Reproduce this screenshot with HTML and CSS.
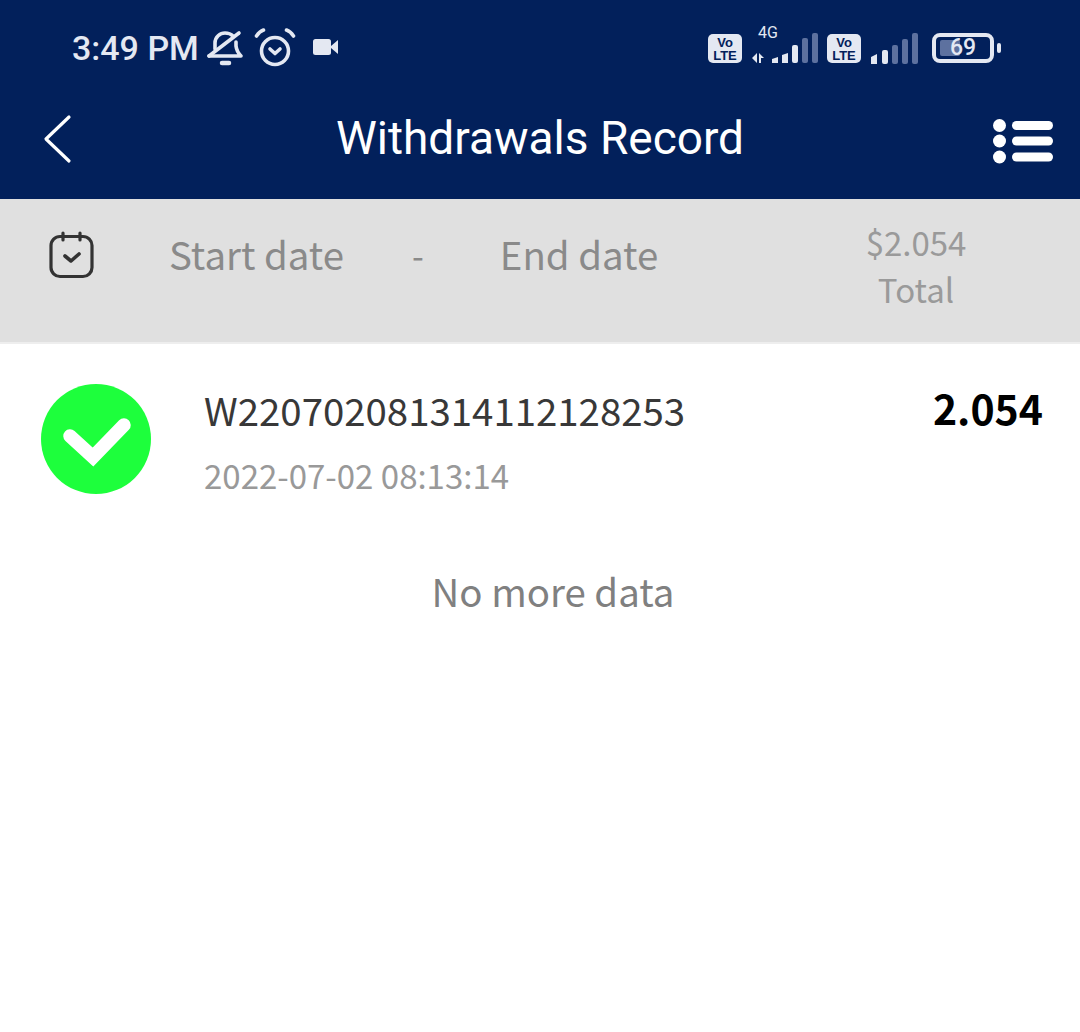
FILE: index.html
```html
<!DOCTYPE html>
<html lang="en">
<head>
  <meta charset="UTF-8">
  <title>Withdrawals Record</title>
  <link rel="stylesheet" href="styles.css">
</head>
<body>
  <div class="top">
    <div class="status-bar">
      <span class="time">3:49 PM</span>
      <svg class="bell" width="38" height="40" viewBox="0 0 38 40" fill="none" stroke="#e4e8f2" stroke-width="3.6" stroke-linecap="round" stroke-linejoin="round">
        <path d="M3 29h32c-3-3-4.500-6-5-10v-4"/>
        <path d="M9 22v-6c0-6 5-10 10-10 3 0 6 1 8 3"/>
        <path d="M3 29L33 6"/>
        <path d="M16 36h7" stroke-width="4.500"/>
      </svg>
      <svg class="alarm" width="42" height="40" viewBox="0 0 42 40" fill="none" stroke="#e4e8f2" stroke-width="3.6" stroke-linecap="round" stroke-linejoin="round">
        <circle cx="21" cy="23" r="13.500"/>
        <path d="M16 21l5 4.500 5-4.500"/>
        <path d="M2.500 8c2-3 4-5 7-6"/>
        <path d="M39.500 8c-2-3-4-5-7-6"/>
      </svg>
      <svg class="video" width="26" height="16" viewBox="0 0 26 16">
        <rect x="0" y="0" width="18" height="16" rx="2.500" fill="#e4e8f2"/>
        <path d="M18 7l7-6v14l-7-6z" fill="#e4e8f2"/>
      </svg>
      <div class="status-right">
        <span class="volte"><b>Vo</b><b>LTE</b></span>
        <div class="signal-first">
          <span class="net">4G</span>
          <svg width="67" height="31" viewBox="0 0 67 31">
            <g fill="#e4e8f2">
              <path d="M1 26l5-5v10zM8 31V21l5 5h-3v5z"/>
              <path d="M21 27l6-2v6h-6z"/>
              <path d="M31 23l6-2v10h-6z"/>
            </g>
            <rect x="41" y="13" width="6" height="18" rx="2" fill="#e4e8f2"/>
            <rect x="51" y="6" width="6" height="25" rx="2" fill="#5d719f"/>
            <rect x="61" y="1" width="6" height="30" rx="2" fill="#5d719f"/>
          </svg>
        </div>
        <span class="volte"><b>Vo</b><b>LTE</b></span>
        <svg class="signal-second" width="48" height="31" viewBox="0 0 48 31">
          <path d="M0 24l6-3v10H0z" fill="#e4e8f2"/>
          <rect x="11" y="17" width="6" height="14" rx="2" fill="#e4e8f2"/>
          <rect x="21" y="12" width="6" height="19" rx="2" fill="#5d719f"/>
          <rect x="31" y="6" width="6" height="25" rx="2" fill="#5d719f"/>
          <rect x="41" y="0" width="6" height="31" rx="2" fill="#5d719f"/>
        </svg>
        <div class="battery">
          <div class="battery-body">
            <div class="battery-fill"></div>
            <span class="battery-level">69</span>
          </div>
          <div class="battery-tip"></div>
        </div>
      </div>
    </div>
    <div class="title-bar">
      <svg class="back" width="30" height="50" viewBox="0 0 30 50" fill="none" stroke="#fff" stroke-width="3.200" stroke-linecap="round" stroke-linejoin="round">
        <path d="M26 3L3 25l23 22"/>
      </svg>
      <h1>Withdrawals Record</h1>
      <svg class="menu" width="60" height="45" viewBox="0 0 60 45" fill="#fff">
        <circle cx="6.500" cy="6.500" r="6.500"/>
        <circle cx="6.500" cy="22" r="6.500"/>
        <circle cx="6.500" cy="38" r="6.500"/>
        <rect x="19" y="2" width="41" height="9" rx="4.500"/>
        <rect x="19" y="17.500" width="41" height="9" rx="4.500"/>
        <rect x="19" y="33.500" width="41" height="9" rx="4.500"/>
      </svg>
    </div>
  </div>

  <div class="filter-bar">
    <svg class="calendar" width="46" height="48" viewBox="0 0 46 48" fill="none" stroke="#333" stroke-width="3.200" stroke-linecap="round" stroke-linejoin="round">
      <rect x="3" y="5.500" width="41" height="40" rx="9"/>
      <path d="M15 2v7M32 2v7"/>
      <path d="M17 25l6 5 8-7" stroke-width="3.600"/>
    </svg>
    <span class="date-input">Start date</span>
    <span class="date-sep">-</span>
    <span class="date-input">End date</span>
    <div class="total">
      <span>$2.054</span>
      <span>Total</span>
    </div>
  </div>

  <div class="record">
    <div class="record-icon">
      <svg width="110" height="110" viewBox="0 0 110 110">
        <circle cx="55" cy="55" r="55" fill="#1dff3c"/>
        <path d="M29 52l23 21 31-32" fill="none" stroke="#fff" stroke-width="13.500" stroke-linecap="round" stroke-linejoin="miter"/>
      </svg>
    </div>
    <div class="record-info">
      <div class="record-no">W220702081314112128253</div>
      <div class="record-time">2022-07-02 08:13:14</div>
    </div>
    <div class="record-amount">2.054</div>
  </div>

  <div class="no-more">No more data</div>
</body>
</html>
```

FILE: styles.css
```css
* {
  box-sizing: border-box;
}
body {
  margin: 0;
  height: 1032px;
  background-color: #fff;
  font-family: "Noto Sans CJK SC", "Noto Sans", sans-serif;
  overflow: hidden;
}
.top {
  background-color: #02205b;
  height: 199px;
  color: #fff;
}
.status-bar {
  height: 96px;
  display: flex;
  align-items: center;
  padding-left: 72px;
  font-family: Roboto, sans-serif;
}
.time {
  font-size: 34px;
  font-weight: 500;
  color: #e4e8f2;
}
.bell {
  margin-left: 7px;
  margin-top: -2px;
}
.alarm {
  margin-left: 10px;
}
.video {
  margin-left: 17px;
  margin-top: -2px;
}
.status-right {
  margin-left: auto;
  margin-right: 79px;
  display: flex;
  align-items: flex-end;
  height: 36px;
  margin-top: -6px;
}
.volte {
  width: 34px;
  height: 29px;
  background-color: #e4e8f2;
  border-radius: 5px;
  color: #02205b;
  display: flex;
  flex-direction: column;
  align-items: center;
  justify-content: center;
  font-size: 13px;
  line-height: 13px;
  font-family: "Liberation Sans", sans-serif;
}
.signal-first {
  position: relative;
  margin-left: 9px;
  width: 67px;
  height: 31px;
}
.signal-first svg {
  display: block;
}
.net {
  position: absolute;
  left: 7px;
  top: -8px;
  font-size: 16px;
  line-height: 18px;
  color: #e4e8f2;
}
.signal-second {
  margin-left: 10px;
  margin-right: 13px;
  margin-bottom: -1px;
}
.signal-first + .volte {
  margin-left: 9px;
}
.battery {
  display: flex;
  align-items: center;
}
.battery-body {
  position: relative;
  width: 62px;
  height: 30px;
  border: 4px solid #e4e8f2;
  border-radius: 8px;
}
.battery-fill {
  position: absolute;
  left: 4px;
  top: 3px;
  bottom: 3px;
  width: 20px;
  background-color: #5d719f;
  border-radius: 2px;
}
.battery-level {
  position: relative;
  display: block;
  text-align: center;
  font-size: 23px;
  font-weight: 500;
  line-height: 22px;
  color: #e4e8f2;
}
.battery-tip {
  width: 4px;
  height: 10px;
  margin-left: 3px;
  background-color: #e4e8f2;
  border-radius: 2px;
}
.title-bar {
  height: 103px;
  display: grid;
  grid-template-columns: 1fr auto 1fr;
  align-items: center;
  padding: 0 27px 20px 27px;
}
.back {
  margin-left: 16px;
  margin-top: 2px;
}
.menu {
  justify-self: end;
  margin-top: 7px;
}
.title-bar h1 {
  margin: 0;
  font-family: Roboto, sans-serif;
  font-size: 46px;
  font-weight: 400;
  line-height: 52px;
}
.filter-bar {
  height: 145px;
  background-color: #e0e0e0;
  border-bottom: 2px solid #eeeeee;
  display: flex;
  align-items: flex-start;
  padding: 30px 0 0 48px;
  color: #8a8a8a;
}
.calendar {
  margin-top: 2px;
}
.date-input {
  font-size: 38.4px;
  line-height: 48px;
}
.date-input:first-of-type {
  margin-left: 75px;
}
.date-sep {
  font-size: 34px;
  line-height: 52px;
  margin-left: 68px;
  margin-right: 76px;
}
.total {
  margin-left: auto;
  width: 100px;
  margin-top: -10px;
  margin-right: 114px;
  display: flex;
  flex-direction: column;
  align-items: center;
  font-size: 33px;
  line-height: 47px;
  color: #9a9a9a;
}
.record {
  display: flex;
  padding: 40px 37px 0 41px;
}
.record-icon {
  width: 110px;
  height: 110px;
}
.record-icon svg {
  display: block;
}
.record-info {
  margin-left: 53px;
  flex: 1;
}
.record-no {
  margin-top: -3px;
  font-size: 38.4px;
  line-height: 56px;
  color: #383838;
}
.record-time {
  margin-top: 16px;
  font-size: 33px;
  line-height: 44px;
  color: #999;
}
.record-amount {
  margin-top: -2px;
  font-size: 41px;
  font-weight: 700;
  line-height: 50px;
  color: #000;
}
.no-more {
  margin-top: 66px;
  text-align: center;
  padding-left: 26px;
  font-size: 38.4px;
  line-height: 54px;
  color: #808080;
}
```
